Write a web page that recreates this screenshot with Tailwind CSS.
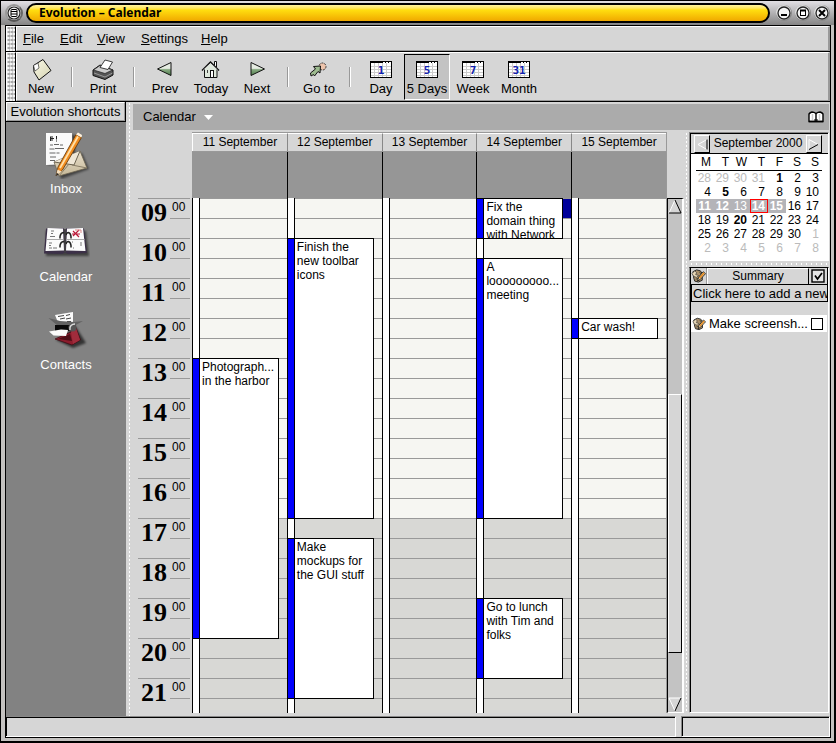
<!DOCTYPE html>
<html lang="en">
<head>
<meta charset="utf-8">
<meta name="viewport" content="width=device-width, initial-scale=1">
<title>Evolution – Calendar</title>
<script src="https://cdn.jsdelivr.net/npm/@tailwindcss/browser@4"></script>
</head>
<body class="h-screen overflow-hidden bg-black font-['Liberation_Sans',Arial,sans-serif] text-[12px] leading-[14px] text-black">
<svg width="0" height="0" class="absolute" aria-hidden="true">
  <defs>
    <symbol id="task" viewBox="0 0 16 16">
      <path d="M2 4 6 2l4 1 2 3v7l-4 2-4-1-1-3z" fill="#a98f6a" stroke="#222"/>
      <path d="M1 6l3-3 2 2-1 2 3 1-2 2-3-1z" fill="#e4d4b4" stroke="#333" stroke-width=".7"/>
      <path d="M5 12l3-1M9 4l2 3" stroke="#443" />
      <path d="M7 14 8 10 13 4l2.500 2L10 12z" fill="#f6dcae" stroke="#111" stroke-width=".9"/>
      <path d="M9 11 14 5" stroke="#e88a1c" stroke-width="1.500"/>
    </symbol>
    <symbol id="sheet" viewBox="0 0 24 24">
      <rect x="1.500" y="3.500" width="21" height="16" fill="#fff" stroke="#000"/>
      <path d="M5.500 5v14M9.500 5v14M13.500 5v14M17.500 5v14M2 8.500h20M2 11.500h20M2 14.500h20M2 17.500h20" stroke="#ccc"/>
      <path d="M1 4.500h13M16 4.500h1M19 4.500h1M22 4.500h1" stroke="#000"/>
    </symbol>
    <linearGradient id="tri" x1="0" y1="0" x2="0" y2="1"><stop offset=".45" stop-color="#e6ece2"/><stop offset=".55" stop-color="#86a880"/><stop offset="1" stop-color="#4f7f4c"/></linearGradient>
    <linearGradient id="pap" x1="0" y1="0" x2="1" y2="1"><stop offset="0" stop-color="#fbfae8"/><stop offset="1" stop-color="#d4d2b0"/></linearGradient>
    <linearGradient id="env" x1="0" y1="0" x2="0" y2="1"><stop offset="0" stop-color="#e9dfcb"/><stop offset="1" stop-color="#c5b898"/></linearGradient>
    <filter id="soft" x="-20%" y="-20%" width="150%" height="150%"><feGaussianBlur stdDeviation="1.300"/></filter>
  </defs>
</svg>

<div class="flex h-full flex-col border-t border-l border-r-2 border-b-2 border-black bg-[#c4c2c0]">
  <header class="flex h-6 shrink-0 items-center bg-linear-to-b from-[#e2e0e4] to-[#858585] pl-1 pr-[3px]">
    <button aria-label="Window menu" class="flex size-[18px] items-center justify-center rounded-full border-2 border-t-[#999] border-l-[#999] border-r-[#666] border-b-[#555] bg-[#eee]">
      <svg width="14" height="14" viewBox="0 0 14 14"><circle cx="7" cy="7" r="6" fill="#f2f2f2" stroke="#222" stroke-width="1.200"/><rect x="4" y="3.500" width="6" height="7" rx="1" fill="#fff" stroke="#000"/><path d="M4 5.500h6M4 8h6" stroke="#000"/></svg>
    </button>
    <h1 class="ml-[3px] flex h-5 flex-1 items-center rounded-full border-2 border-black bg-linear-to-b from-[#fff3a0] via-[#ffdf10] via-30% to-[#f0a800] pl-[11px] font-['Noto_Sans','Open_Sans',sans-serif] text-[12px] leading-4 font-bold">Evolution – Calendar</h1>
    <div class="ml-[5px] flex gap-px">
      <button aria-label="Minimize" class="size-[18px]"><svg width="18" height="18" viewBox="0 0 18 18"><circle cx="9" cy="9" r="8" fill="#888" /><circle cx="8.500" cy="8.500" r="7.500" fill="#ddd"/><circle cx="9" cy="9" r="6" fill="#f4f4f4" stroke="#222" stroke-width="1.300"/><path d="M6 11h6" stroke="#000" stroke-width="2"/></svg></button>
      <button aria-label="Maximize" class="size-[18px]"><svg width="18" height="18" viewBox="0 0 18 18"><circle cx="9" cy="9" r="8" fill="#888" /><circle cx="8.500" cy="8.500" r="7.500" fill="#ddd"/><circle cx="9" cy="9" r="6" fill="#f4f4f4" stroke="#222" stroke-width="1.300"/><rect x="6.500" y="6.500" width="5" height="5" fill="#fff" stroke="#000"/><path d="M6 6.500h6" stroke="#000" stroke-width="2"/></svg></button>
      <button aria-label="Close" class="size-[18px]"><svg width="18" height="18" viewBox="0 0 18 18"><circle cx="9" cy="9" r="8" fill="#888" /><circle cx="8.500" cy="8.500" r="7.500" fill="#ddd"/><circle cx="9" cy="9" r="6" fill="#f4f4f4" stroke="#222" stroke-width="1.300"/><path d="M6 6l6 6M12 6l-6 6" stroke="#000" stroke-width="2"/></svg></button>
    </div>
  </header>

  <div class="mr-[3px] mb-[3px] ml-1 flex min-h-0 flex-1 flex-col border border-black bg-[#d6d6d6]">
    <nav class="flex h-[26px] shrink-0 border-b border-black" aria-label="Menu bar">
      <div class="w-[10px] border-t border-r border-l border-t-white border-r-black border-l-white bg-[#d0d0d0] bg-[conic-gradient(#aaa_25%,transparent_25%_50%,#f4f4f4_50%_75%,transparent_75%)] bg-[length:3px_4px]"></div>
      <div class="flex flex-1 items-center border-t border-l border-r-2 border-b border-t-white border-l-white border-r-[#999] border-b-[#999] pl-[6px] text-[13px]">
        <button class="w-[37px] text-left"><u>F</u>ile</button>
        <button class="w-[37px] text-left"><u>E</u>dit</button>
        <button class="w-11 text-left"><u>V</u>iew</button>
        <button class="w-[60px] text-left"><u>S</u>ettings</button>
        <button class="text-left"><u>H</u>elp</button>
      </div>
    </nav>

    <div class="flex h-[50px] shrink-0 border-b border-black" role="toolbar" aria-label="Toolbar">
      <div class="w-[10px] border-t border-r border-l border-t-white border-r-black border-l-white bg-[#d0d0d0] bg-[conic-gradient(#aaa_25%,transparent_25%_50%,#f4f4f4_50%_75%,transparent_75%)] bg-[length:3px_4px]"></div>
      <div class="flex flex-1 items-stretch border-t border-l border-r-2 border-b border-t-white border-l-white border-r-[#999] border-b-[#999] py-px pl-px text-[13px]">
        <button class="flex w-[46px] flex-col items-center pt-1">
          <svg width="24" height="24" viewBox="0 0 24 24"><path d="M4.500 7.500 14 1.500 22 12.500 10 22 5 14z" fill="url(#pap)" stroke="#111"/><path d="M4.500 7.500 9 5l1 5-4 3z" fill="#fff" stroke="#333" stroke-width=".7"/></svg>
          <span>New</span></button>
        <div class="flex w-4 items-center justify-center"><span class="h-5 w-[2px] border-l border-[#999] bg-white"></span></div>
        <button class="flex w-[46px] flex-col items-center pt-1">
          <svg width="24" height="24" viewBox="0 0 24 24"><path d="M2 12 9 7l13 5v5l-8 4.500L2 17.500z" fill="#555" stroke="#111"/><path d="M2.500 12 9 7.500l12.500 4.500-7.500 3.500z" fill="#ccc" stroke="#222" stroke-width=".7"/><path d="M9 9.500 14 2l7.500 2L17 11.500z" fill="#fff" stroke="#111" stroke-width=".8"/><path d="M3 15l11 4 7.500-4" stroke="#999" fill="none"/></svg>
          <span>Print</span></button>
        <div class="flex w-4 items-center justify-center"><span class="h-5 w-[2px] border-l border-[#999] bg-white"></span></div>
        <button class="flex w-[46px] flex-col items-center pt-1">
          <svg width="24" height="24" viewBox="0 0 24 24"><path d="M4.500 11 18 4.500v13z" fill="url(#tri)" stroke="#111"/></svg>
          <span>Prev</span></button>
        <button class="flex w-[46px] flex-col items-center pt-1">
          <svg width="24" height="24" viewBox="0 0 24 24"><path d="M15.500 7V3.500h2V9" fill="#fff" stroke="#111"/><path d="M5.500 10.500 11.500 5l6.500 6v8.500H5.500z" fill="#dfe8dc" stroke="#111"/><path d="M3 12.500 11.500 4l8.500 8.500" fill="none" stroke="#111" stroke-width="1.500"/><path d="M4.500 12 11.500 5.500 18.500 12" fill="none" stroke="#fff" stroke-width=".8"/><rect x="11.500" y="12.500" width="3" height="7" fill="#fff" stroke="#111"/><path d="M8.500 12v3" stroke="#444"/></svg>
          <span>Today</span></button>
        <button class="flex w-[46px] flex-col items-center pt-1">
          <svg width="24" height="24" viewBox="0 0 24 24"><path d="M19.500 11 6 4.500v13z" fill="url(#tri)" stroke="#111"/></svg>
          <span>Next</span></button>
        <div class="flex w-4 items-center justify-center"><span class="h-5 w-[2px] border-l border-[#999] bg-white"></span></div>
        <button class="flex w-[46px] flex-col items-center pt-1">
          <svg width="24" height="24" viewBox="0 0 24 24"><circle cx="15.500" cy="8.500" r="3.500" fill="#edc3ab" stroke="#333" stroke-dasharray="2 1"/><path d="M6.500 8.500 13.500 8l-.500 7-2-1.500-3.500 4.500-1-1.500-2.500 1.500-.500-3 5-4z" fill="#9dbb8f" stroke="#111"/></svg>
          <span>Go to</span></button>
        <div class="flex w-4 items-center justify-center"><span class="h-5 w-[2px] border-l border-[#999] bg-white"></span></div>
        <button class="flex w-[46px] flex-col items-center pt-1">
          <svg width="24" height="24" viewBox="0 0 24 24"><use href="#sheet"/><text x="12" y="16" text-anchor="middle" class="fill-[#1020b0] font-['DejaVu_Sans_Mono',monospace] text-[11px] font-bold">1</text></svg>
          <span>Day</span></button>
        <button aria-pressed="true" class="-mb-px flex w-[46px] flex-col items-center border border-t-black border-l-black border-r-white border-b-white bg-[#c3c3c3] pt-[3px] whitespace-nowrap">
          <svg width="24" height="24" viewBox="0 0 24 24"><use href="#sheet"/><text x="12" y="16" text-anchor="middle" class="fill-[#1020b0] font-['DejaVu_Sans_Mono',monospace] text-[11px] font-bold">5</text></svg>
          <span>5 Days</span></button>
        <button class="flex w-[46px] flex-col items-center pt-1">
          <svg width="24" height="24" viewBox="0 0 24 24"><use href="#sheet"/><text x="12" y="16" text-anchor="middle" class="fill-[#1020b0] font-['DejaVu_Sans_Mono',monospace] text-[11px] font-bold">7</text></svg>
          <span>Week</span></button>
        <button class="flex w-[46px] flex-col items-center pt-1">
          <svg width="24" height="24" viewBox="0 0 24 24"><use href="#sheet"/><text x="12" y="16" text-anchor="middle" class="fill-[#1020b0] font-['DejaVu_Sans_Mono',monospace] text-[11px] font-bold">31</text></svg>
          <span>Month</span></button>
      </div>
    </div>

    <div class="flex min-h-0 flex-1">
      <aside class="flex w-[120px] shrink-0 flex-col bg-[#828282] text-[13px]">
        <button class="h-5 border-r border-b border-black text-center whitespace-nowrap"><span class="block h-full border border-t-white border-l-white border-r-[#999] border-b-[#999] bg-[#d6d6d6] leading-[17px]">Evolution shortcuts</span></button>
        <div class="flex flex-col items-center gap-[23px] pt-[9px] text-white">
          <a href="#inbox" class="flex flex-col items-center gap-[3px]">
            <svg width="48" height="48" viewBox="0 0 48 48"><path d="M6 4h27v30H6zM15 32 40 22l7 16-28 10z" fill="#000" opacity=".5" filter="url(#soft)"/><path d="M4 2h26l1 31-27 1z" fill="#fafafa"/><path d="M8 6h3M8 7.500h4M8 9h3M8.500 6v4M14.500 5v3.500M14.500 9.500v1" stroke="#222"/><path d="M8 14h3M12 13.500h5M18 14h3M7.500 18h5M13 17.500h9M7.500 22h6M14.500 22h3M8 26h6M8 29.500h5" stroke="#666"/><path d="M12 31 38 20l7 17-28 8z" fill="url(#env)" stroke="#6c6350" stroke-width=".8"/><path d="M12 31l20 3 6-14" fill="#efe7d6" stroke="#6c6350"/><path d="M17 45l10-12M45 37l-15-3" stroke="#8a7f68" fill="none"/><path d="M14 45 16 36 34 3.500l5.500 3L20.500 39z" fill="#f28c1e" stroke="#5b3208" stroke-width=".8"/><path d="M18 37 36 5.500" stroke="#ffe0a8" stroke-width="1.800"/><path d="M34 3.500 36 1.500l4 2.500-.500 2.500z" fill="#fff3df"/><path d="M14 45l1.500-6.500 4 2z" fill="#f4dfc0"/><path d="M14 45l.700-3 2 1z" fill="#111"/></svg>
            <span>Inbox</span></a>
          <a href="#calendar" class="flex flex-col items-center gap-[3px]">
            <svg width="48" height="48" viewBox="0 0 48 48"><path d="M4 12h40l3 25H4z" fill="#000" opacity=".5" filter="url(#soft)"/><path d="M4 9.500 21 9l2 2 2-2 17 .500L45 34l-19 1-3-1.500-3 1.500-18-.500z" fill="#3c3048"/><path d="M5.500 9 21 9.500 22 31.500 3.500 32zM25 9.500 41 9l2.500 23L24 31.500z" fill="#fbfbfb"/><path d="M5 20.500h16M24.500 20.500h18" stroke="#aaa"/><path d="M9 12h3M9 14.500h2M8 17.500h5M7 24h3M7 26.500h2M7 29h3M11 29h4M38 24h2M38 26h2M31 29h1M30 23h1" stroke="#777"/><path d="M31 12l6 6M37 11l-6 6M30 15h8" stroke="#bb1838" stroke-width="1.100"/><path d="M33 11h6v3" stroke="#d88" fill="none"/><path d="M18 19c0-6 5-7 6-3M29 19c0-6-4-7-5-3M18 28c0-6 5-7 6-3M29 28c0-6-4-7-5-3" fill="none" stroke="#222" stroke-width="1.600"/><path d="M23 10v23" stroke="#444" stroke-width="1.500"/><path d="M17 18.500h2M28 18.500h2M17 27.500h2M28 27.500h2" stroke="#555" stroke-width="2"/></svg>
            <span>Calendar</span></a>
          <a href="#contacts" class="flex flex-col items-center gap-[3px]">
            <svg width="48" height="48" viewBox="0 0 48 48"><path d="M14 33 34 20l10 16-13 5z" fill="#000" opacity=".6" filter="url(#soft)"/><path d="M13 8 31 5v13H17z" fill="#fbfbfb"/><path d="M16 9.500l6-1M24 8.500l4-1M18 12l5-1M24 12l5-1M25 14.500h4" stroke="#444" stroke-width="1"/><path d="M13 32l16-7 4-7 5.500 15-8.500 5z" fill="#8c1c2c" stroke="#3b0a12" stroke-width=".7"/><path d="M29 25l4-7 5 15-7 4z" fill="#a02c3c"/><path d="M16 32l12-5 2 7z" fill="#4d0e18"/><path d="M6.500 11 18 14l14 1 9-1-9 5H16z" fill="#626262"/><path d="M13 18h17v6H13z" fill="#0a0a0a"/><circle cx="30.500" cy="20.500" r="4" fill="#555"/><path d="M28 23c-1-4 2-6 5-6" fill="none" stroke="#ddd" stroke-width="1.500"/><path d="M7 24.500l12-2 7 .500-2 6-12.500-.500z" fill="#fbfbfb"/></svg>
            <span>Contacts</span></a>
        </div>
      </aside>
      <div class="w-[7px] shrink-0 bg-[radial-gradient(circle,#fff_0_1px,transparent_1px)] bg-[length:7px_4px]"></div>

      <main class="flex min-w-0 flex-1 flex-col pt-[2px] pr-px pb-[3px]">
        <div class="flex h-[26px] shrink-0 items-center justify-between bg-[#ababab] pr-[5px] pl-[10px]">
          <button class="flex items-center gap-2 text-[13px]">Calendar <svg width="9" height="5" viewBox="0 0 9 5"><path d="M0 0h9L4.500 5z" fill="#fff"/></svg></button>
          <button aria-label="Open book view"><svg width="16" height="12" viewBox="0 0 16 12"><path d="M1 10.500V3q1-1.500 3-2 2 0 4 1.500Q10 1 12 1q2 .500 3 2v7.500z" fill="#fff" stroke="#000" stroke-width="1.400"/><path d="M8 2v9M1 10.500h14" stroke="#000" stroke-width="1.400"/><path d="M4.500 3v6M11.500 3v6" stroke="#ccc" stroke-width="1.500"/><path d="M6 9h4" stroke="#000"/></svg></button>
        </div>

        <div class="flex min-h-0 flex-1 pt-[2px]">
          <section class="flex min-w-0 flex-1 flex-col" aria-label="Work week">
            <div class="mr-[17px] ml-[59px] flex h-[66px] shrink-0 border-r border-[#999] bg-[#969696]">
              <div class="flex flex-1 flex-col text-center"><h2 class="h-5 border-t border-b border-[#999] bg-[#d6d6d6] whitespace-nowrap"><span class="block h-full border-t border-l border-white leading-[17px]">11 September</span></h2></div>
              <div class="flex flex-1 flex-col text-center"><h2 class="h-5 border-t border-b border-[#999] bg-[#d6d6d6] whitespace-nowrap"><span class="block h-full border-t border-l border-t-white border-l-[#888] leading-[17px]">12 September</span></h2><div class="flex-1 border-l border-black"></div></div>
              <div class="flex flex-1 flex-col text-center"><h2 class="h-5 border-t border-b border-[#999] bg-[#d6d6d6] whitespace-nowrap"><span class="block h-full border-t border-l border-t-white border-l-[#888] leading-[17px]">13 September</span></h2><div class="flex-1 border-l border-black"></div></div>
              <div class="flex flex-1 flex-col text-center"><h2 class="h-5 border-t border-b border-[#999] bg-[#d6d6d6] whitespace-nowrap"><span class="block h-full border-t border-l border-t-white border-l-[#888] leading-[17px]">14 September</span></h2><div class="flex-1 border-l border-black"></div></div>
              <div class="flex flex-1 flex-col text-center"><h2 class="h-5 border-t border-b border-[#999] bg-[#d6d6d6] whitespace-nowrap"><span class="block h-full border-t border-l border-t-white border-l-[#888] leading-[17px]">15 September</span></h2><div class="flex-1 border-l border-black"></div></div>
            </div>

            <div class="flex min-h-0 flex-1">
              <div class="flex min-w-0 flex-1 overflow-hidden">
                <ol class="w-[59px] shrink-0 pr-[2px] pl-[5px] font-['Liberation_Serif','Times_New_Roman',serif] text-[26px] leading-[27px] font-bold">
                  <li class="flex h-10 border-t border-[#999] pl-[3px]">09<span class="ml-auto h-5 w-5 border-b border-[#999] pl-[2px] font-['Liberation_Sans',Arial,sans-serif] text-[12px] leading-4 font-normal">00</span></li>
                  <li class="flex h-10 border-t border-[#999] pl-[3px]">10<span class="ml-auto h-5 w-5 border-b border-[#999] pl-[2px] font-['Liberation_Sans',Arial,sans-serif] text-[12px] leading-4 font-normal">00</span></li>
                  <li class="flex h-10 border-t border-[#999] pl-[3px]">11<span class="ml-auto h-5 w-5 border-b border-[#999] pl-[2px] font-['Liberation_Sans',Arial,sans-serif] text-[12px] leading-4 font-normal">00</span></li>
                  <li class="flex h-10 border-t border-[#999] pl-[3px]">12<span class="ml-auto h-5 w-5 border-b border-[#999] pl-[2px] font-['Liberation_Sans',Arial,sans-serif] text-[12px] leading-4 font-normal">00</span></li>
                  <li class="flex h-10 border-t border-[#999] pl-[3px]">13<span class="ml-auto h-5 w-5 border-b border-[#999] pl-[2px] font-['Liberation_Sans',Arial,sans-serif] text-[12px] leading-4 font-normal">00</span></li>
                  <li class="flex h-10 border-t border-[#999] pl-[3px]">14<span class="ml-auto h-5 w-5 border-b border-[#999] pl-[2px] font-['Liberation_Sans',Arial,sans-serif] text-[12px] leading-4 font-normal">00</span></li>
                  <li class="flex h-10 border-t border-[#999] pl-[3px]">15<span class="ml-auto h-5 w-5 border-b border-[#999] pl-[2px] font-['Liberation_Sans',Arial,sans-serif] text-[12px] leading-4 font-normal">00</span></li>
                  <li class="flex h-10 border-t border-[#999] pl-[3px]">16<span class="ml-auto h-5 w-5 border-b border-[#999] pl-[2px] font-['Liberation_Sans',Arial,sans-serif] text-[12px] leading-4 font-normal">00</span></li>
                  <li class="flex h-10 border-t border-[#999] pl-[3px]">17<span class="ml-auto h-5 w-5 border-b border-[#999] pl-[2px] font-['Liberation_Sans',Arial,sans-serif] text-[12px] leading-4 font-normal">00</span></li>
                  <li class="flex h-10 border-t border-[#999] pl-[3px]">18<span class="ml-auto h-5 w-5 border-b border-[#999] pl-[2px] font-['Liberation_Sans',Arial,sans-serif] text-[12px] leading-4 font-normal">00</span></li>
                  <li class="flex h-10 border-t border-[#999] pl-[3px]">19<span class="ml-auto h-5 w-5 border-b border-[#999] pl-[2px] font-['Liberation_Sans',Arial,sans-serif] text-[12px] leading-4 font-normal">00</span></li>
                  <li class="flex h-10 border-t border-[#999] pl-[3px]">20<span class="ml-auto h-5 w-5 border-b border-[#999] pl-[2px] font-['Liberation_Sans',Arial,sans-serif] text-[12px] leading-4 font-normal">00</span></li>
                  <li class="flex h-10 border-t border-[#999] pl-[3px]">21<span class="ml-auto h-5 w-5 border-b border-[#999] pl-[2px] font-['Liberation_Sans',Arial,sans-serif] text-[12px] leading-4 font-normal">00</span></li>
                </ol>

                <div class="grid min-w-0 flex-1 grid-cols-5 border-r border-[#999] bg-[#d8d8d5] bg-[repeating-linear-gradient(to_bottom,#999_0_1px,transparent_1px_20px),linear-gradient(#f6f6f2_0_320px,transparent_320px)]">
                  <div class="grid min-w-0 grid-cols-[8px_minmax(0,1fr)_8px] grid-rows-[repeat(26,20px)]">
                    <div class="col-start-1 row-start-1 row-end-27 border-x border-black bg-white"></div>
                    <article class="col-start-1 col-end-3 row-start-9 row-end-23 -mb-px flex overflow-hidden border border-black bg-white"><div class="w-[7px] shrink-0 border-r border-black bg-[#0000fe]"></div><p class="min-w-0 flex-1 pt-px pl-[2px]"><span class="block whitespace-nowrap">Photograph...</span>in the harbor</p></article>
                  </div>
                  <div class="grid min-w-0 grid-cols-[8px_minmax(0,1fr)_8px] grid-rows-[repeat(26,20px)]">
                    <div class="col-start-1 row-start-1 row-end-27 border-x border-black bg-white"></div>
                    <article class="col-start-1 col-end-3 row-start-3 row-end-17 -mb-px flex overflow-hidden border border-black bg-white"><div class="w-[7px] shrink-0 border-r border-black bg-[#0000fe]"></div><p class="min-w-0 flex-1 pt-px pl-[2px]">Finish the<br>new toolbar<br>icons</p></article>
                    <article class="col-start-1 col-end-3 row-start-18 row-end-26 -mb-px flex overflow-hidden border border-black bg-white"><div class="w-[7px] shrink-0 border-r border-black bg-[#0000fe]"></div><p class="min-w-0 flex-1 pt-px pl-[2px]">Make<br>mockups for<br>the GUI stuff</p></article>
                  </div>
                  <div class="grid min-w-0 grid-cols-[8px_minmax(0,1fr)_8px] grid-rows-[repeat(26,20px)]">
                    <div class="col-start-1 row-start-1 row-end-27 border-x border-black bg-white"></div>
                  </div>
                  <div class="grid min-w-0 grid-cols-[8px_minmax(0,1fr)_8px] grid-rows-[repeat(26,20px)]">
                    <div class="col-start-1 row-start-1 row-end-27 border-x border-black bg-white"></div>
                    <article class="col-start-1 col-end-3 row-start-1 row-end-3 -mb-px flex overflow-hidden border border-black bg-white"><div class="w-[7px] shrink-0 border-r border-black bg-[#0000fe]"></div><p class="min-w-0 flex-1 pt-px pl-[2px]">Fix the<br>domain thing<br>with Network</p></article>
                    <div class="col-start-3 row-start-1 mt-px bg-[#00009a]"></div>
                    <article class="col-start-1 col-end-3 row-start-4 row-end-17 -mb-px flex overflow-hidden border border-black bg-white"><div class="w-[7px] shrink-0 border-r border-black bg-[#0000fe]"></div><p class="min-w-0 flex-1 pt-px pl-[2px] whitespace-nowrap">A<br>looooooooo...<br>meeting</p></article>
                    <article class="col-start-1 col-end-3 row-start-21 row-end-25 -mb-px flex overflow-hidden border border-black bg-white"><div class="w-[7px] shrink-0 border-r border-black bg-[#0000fe]"></div><p class="min-w-0 flex-1 pt-px pl-[2px]">Go to lunch<br>with Tim and<br>folks</p></article>
                  </div>
                  <div class="grid min-w-0 grid-cols-[8px_minmax(0,1fr)_8px] grid-rows-[repeat(26,20px)]">
                    <div class="col-start-1 row-start-1 row-end-27 border-x border-black bg-white"></div>
                    <article class="col-start-1 col-end-3 row-start-7 row-end-8 -mb-px flex overflow-hidden border border-black bg-white"><div class="w-[7px] shrink-0 border-r border-black bg-[#0000fe]"></div><p class="min-w-0 flex-1 pt-px pl-[2px]">Car wash!</p></article>
                  </div>
                </div>
              </div>

              <div class="flex w-[17px] shrink-0 flex-col border-t border-r-2 border-b border-l border-t-black border-r-white border-b-white border-l-black bg-[#c3c3c3]">
                <button aria-label="Scroll up"><svg width="14" height="15" viewBox="0 0 14 15"><path d="M7 1 1 14h12z" fill="#d6d6d6"/><path d="M7 1 1 14" stroke="#fff"/><path d="M7 1l6 13H1" stroke="#000" fill="none"/></svg></button>
                <div class="flex-[181]"></div>
                <div class="flex-[259] border border-t-white border-l-white border-r-black border-b-black bg-[#d6d6d6]"></div>
                <div class="flex-[44]"></div>
                <button aria-label="Scroll down"><svg width="14" height="15" viewBox="0 0 14 15"><path d="M1 1h12L7 14z" fill="#d6d6d6"/><path d="M7 14 1 1h12" stroke="#fff" fill="none"/><path d="M13 1 7 14" stroke="#000"/></svg></button>
              </div>
            </div>
          </section>

          <div class="w-[5px] shrink-0 bg-[radial-gradient(circle,#fff_0_1px,transparent_1px)] bg-[length:5px_4px]"></div>

          <aside class="flex w-[140px] shrink-0 flex-col">
            <div class="h-[129px] shrink-0 border border-t-[#888] border-l-[#888] border-r-white border-b-white">
              <div class="h-full border-t border-l border-black bg-white">
                <div class="flex h-5 items-stretch justify-between border-b border-black bg-[#d6d6d6] pt-px pr-[6px] pl-[3px]">
                  <button aria-label="Previous month" class="flex w-4 items-center justify-center border border-t-white border-l-white border-r-black border-b-black"><svg width="11" height="11" viewBox="0 0 11 11"><path d="M10 .500 1 5.500 10 10.500z" fill="#d6d6d6"/><path d="M10 .500 1 5.500 10 10.500" stroke="#fff" fill="none"/><path d="M10 10.500V.500" stroke="#000" fill="none"/></svg></button>
                  <span class="leading-[17px]">September 2000</span>
                  <button aria-label="Next month" class="flex w-4 items-center justify-center border border-t-white border-l-white border-r-black border-b-black"><svg width="11" height="11" viewBox="0 0 11 11"><path d="M1 .500l9 5-9 5z" fill="#d6d6d6"/><path d="M10 5.500 1 .500v10" stroke="#fff" fill="none"/><path d="M10 5.500l-9 5" stroke="#000"/></svg></button>
                </div>
                <div class="pr-[6px] pl-[5px]">
                  <table class="w-full table-fixed border-collapse text-right">
                    <thead><tr class="h-4 border-b border-black *:pr-[3px] *:font-normal"><th>M</th><th>T</th><th>W</th><th>T</th><th>F</th><th>S</th><th>S</th></tr></thead>
                    <tbody class="*:h-[14px] *:*:pr-[3px]">
                      <tr class="text-[#bbb]"><td>28</td><td>29</td><td>30</td><td>31</td><td class="font-bold text-black">1</td><td class="text-black">2</td><td class="text-black">3</td></tr>
                      <tr><td>4</td><td class="font-bold">5</td><td>6</td><td>7</td><td>8</td><td>9</td><td>10</td></tr>
                      <tr><td class="bg-[#b4b4b8] font-bold text-white">11</td><td class="bg-[#b4b4b8] font-bold text-white">12</td><td class="bg-[#b4b4b8] text-white">13</td><td class="bg-[#b4b4b8] font-bold text-white outline-1 -outline-offset-1 outline-[#f00]">14</td><td class="bg-[#b4b4b8] font-bold text-white">15</td><td>16</td><td>17</td></tr>
                      <tr><td>18</td><td>19</td><td class="font-bold">20</td><td>21</td><td>22</td><td>23</td><td>24</td></tr>
                      <tr><td>25</td><td>26</td><td>27</td><td>28</td><td>29</td><td>30</td><td class="text-[#bbb]">1</td></tr>
                      <tr class="text-[#bbb]"><td>2</td><td>3</td><td>4</td><td>5</td><td>6</td><td>7</td><td>8</td></tr>
                    </tbody>
                  </table>
                </div>
              </div>
            </div>
            <div class="h-[6px] shrink-0 bg-[radial-gradient(circle,#fff_0_1px,transparent_1px)] bg-[length:5px_6px]"></div>
            <div class="flex min-h-0 flex-1 flex-col border border-t-black border-l-[#888] border-r-white border-b-white">
              <div class="flex flex-1 flex-col border-l border-black">
                <div class="flex h-4 shrink-0 border-r border-black">
                  <div class="flex w-4 justify-center border-r border-[#999]"><svg width="15" height="15"><use href="#task"/></svg></div>
                  <div class="flex-1 border-t border-r border-l border-t-white border-r-black border-l-white text-center">Summary</div>
                  <div class="flex w-[18px] items-center justify-center"><svg width="14" height="14" viewBox="0 0 14 14" role="img" aria-label="Complete"><rect x="1" y="1" width="12" height="12" fill="#e6e6e6" stroke="#000" stroke-width="1.400"/><path d="M4 6.500l2.500 3.500L11 4" fill="none" stroke="#000" stroke-width="1.700"/></svg></div>
                </div>
                <input aria-label="New task" value="Click here to add a new task" class="h-[18px] w-full shrink-0 rounded-none border border-black bg-[#d6d6d6] pl-px text-[13px] leading-4 outline-none">
                <div class="mt-[13px] mr-px flex h-[17px] shrink-0 items-center gap-[3px] bg-white pr-1 pl-px">
                  <svg width="15" height="15"><use href="#task"/></svg>
                  <label for="shots" class="flex-1 text-[13px] whitespace-nowrap">Make screensh...</label>
                  <input id="shots" type="checkbox" class="size-3 shrink-0 appearance-none rounded-none border border-black bg-white">
                </div>
              </div>
            </div>
          </aside>
        </div>
      </main>
    </div>

    <footer class="flex h-[21px] shrink-0 gap-[5px]">
      <div class="flex-1 border border-t-[#888] border-l-0 border-r-white border-b-white"><div class="h-full border-t border-l border-black"></div></div>
      <div class="w-[149px] border border-t-[#888] border-l-[#888] border-r-white border-b-white"><div class="h-full border-t border-l border-black"></div></div>
    </footer>
  </div>
</div>
</body>
</html>
